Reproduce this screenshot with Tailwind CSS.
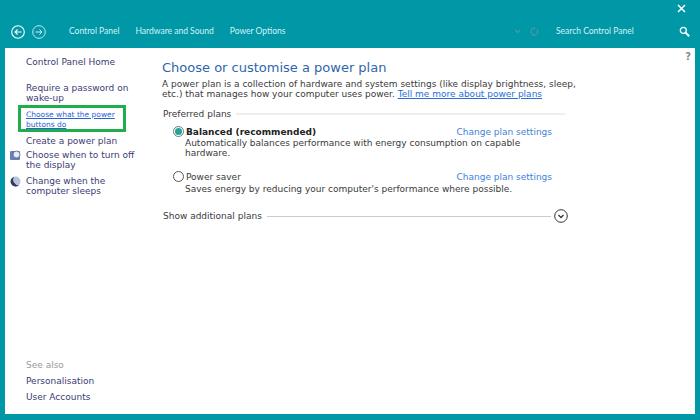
<!DOCTYPE html>
<html>
<head>
    <meta charset="utf-8">
    <title>Power Options</title>
    <script src="https://cdn.jsdelivr.net/npm/@tailwindcss/browser@4"></script>
</head>
<body class="m-0">
<div class="w-[700px] h-[420px] bg-[#0097a7] flex flex-col overflow-hidden font-['DejaVu_Sans',sans-serif]">

    <!-- Barra de titulo -->
    <div class="h-[48px] shrink-0 flex flex-col">
        <div class="h-[17px] flex justify-end items-end pr-[14px]">
            <svg width="9" height="9" viewBox="0 0 9 9" class="mb-[4px]"><path d="M1 1l7 7M8 1l-7 7" stroke="#fff" stroke-width="1.5" fill="none"/></svg>
        </div>
        <div class="flex items-center h-[31px] pb-[2px] font-['Lato',sans-serif] text-[8.5px] text-[#d5f2f5]">
            <div class="flex items-center gap-[7px] pl-[11px] w-[69px]">
                <svg width="14" height="14" viewBox="0 0 14 14" fill="none" stroke="#fff"><circle cx="7" cy="7" r="6.3" stroke-width="1.1"/><path d="M10.5 7h-6.5M6.5 4.5L4 7l2.5 2.5" stroke-width="1.1"/></svg>
                <svg width="14" height="14" viewBox="0 0 14 14" fill="none" stroke="#d5f2f5"><circle cx="7" cy="7" r="6.3" stroke-width="0.9"/><path d="M3.5 7h6.5M7.5 4.5L10 7l-2.5 2.5" stroke-width="1"/></svg>
            </div>
            <div class="flex gap-[16px]">
                <span>Control Panel</span>
                <span>Hardware and Sound</span>
                <span>Power Options</span>
            </div>
            <div class="ml-auto flex items-center">
                <svg width="7" height="5" viewBox="0 0 7 5" fill="none" stroke="#4f9aa0" stroke-width="1.1"><path d="M1 1l2.5 2.5L6 1"/></svg>
                <svg width="9" height="9" viewBox="0 0 9 9" fill="none" stroke="#4f9aa0" stroke-width="1.1" class="ml-[9px]"><path d="M6.8 2.2a3.4 3.4 0 1 1-2.3-.9M4.5 0v2.6"/></svg>
                <span class="ml-[17px] w-[123px]">Search Control Panel</span>
                <svg width="11" height="11" viewBox="0 0 11 11" fill="none" stroke="#fff" class="mr-[10px]"><circle cx="4.3" cy="4.3" r="3" stroke-width="1.3"/><path d="M6.6 6.6l3.6 3.6" stroke-width="2"/></svg>
            </div>
        </div>
    </div>

    <!-- Contenido -->
    <div class="relative mx-[5px] h-[366px] bg-white flex text-[9px] leading-[10px]">
        <span class="absolute top-[3px] right-[4px] text-[10px] leading-[12px] font-bold text-[#8a8a8a]">?</span>

        <!-- Panel izquierdo -->
        <aside class="w-[157px] shrink-0 flex flex-col pl-[21px] text-[#3b3b74]">
            <div class="mt-[9px]">Control Panel Home</div>
            <div class="mt-[16px]">Require a password on<br>wake-up</div>
            <div class="mt-[2px] ml-[-8px] w-[108px] h-[27px] shrink-0 border-[3px] border-[#1fae4b] pl-[5px] pt-[2px] text-[7.5px] text-[#2a5fd6] underline whitespace-nowrap">Choose what the power<br>buttons do</div>
            <div class="mt-[4px]">Create a power plan</div>
            <div class="relative mt-[4px]">
                <svg width="11" height="11" viewBox="0 0 11 11" class="absolute left-[-16px] top-0"><rect x="0" y="1" width="10" height="9" rx="1" fill="#6a7fb8"/><circle cx="6.5" cy="4.5" r="3.5" fill="#e8ecf6" stroke="#555f85" stroke-width="0.8"/></svg>
                Choose when to turn off<br>the display
            </div>
            <div class="relative mt-[6px]">
                <svg width="11" height="11" viewBox="0 0 11 11" class="absolute left-[-16px] top-0"><circle cx="5.5" cy="5.5" r="5" fill="#b9c2da"/><path d="M4 .8a5 5 0 1 0 5 8.4A5.5 5.5 0 0 1 4 .8z" fill="#2f3a5c"/></svg>
                Change when the<br>computer sleeps
            </div>
            <div class="mt-auto mb-[12px] flex flex-col gap-[6px]">
                <div class="text-[#999]">See also</div>
                <div>Personalisation</div>
                <div>User Accounts</div>
            </div>
        </aside>

        <!-- Panel principal -->
        <main class="flex-1 pt-[12px] text-[#3a3a3a]">
            <h1 class="text-[13px] leading-[15px] font-normal text-[#2f66ab]">Choose or customise a power plan</h1>
            <p class="mt-[4px] whitespace-nowrap">A power plan is a collection of hardware and system settings (like display brightness, sleep,<br>etc.) that manages how your computer uses power. <span class="text-[#2a6fd6] underline">Tell me more about power plans</span></p>

            <div class="mt-[10px] ml-[1px] w-[402px] flex items-center gap-[5px]">
                <span>Preferred plans</span>
                <div class="flex-1 h-[2px] bg-[#eeeeee]"></div>
            </div>

            <div class="mt-[7px] ml-[11px] w-[379px]">
                <div class="flex items-center">
                    <span class="w-[11px] h-[11px] rounded-full border border-[#5d7f84] flex items-center justify-center"><span class="w-[7px] h-[7px] rounded-full bg-[#2aa198]"></span></span>
                    <span class="ml-[2px] font-bold text-[#222]">Balanced (recommended)</span>
                    <span class="ml-auto text-[#3f7fd8]">Change plan settings</span>
                </div>
                <p class="mt-[1px] ml-[12px]">Automatically balances performance with energy consumption on capable<br>hardware.</p>
            </div>

            <div class="mt-[13px] ml-[11px] w-[379px]">
                <div class="flex items-center">
                    <span class="w-[11px] h-[11px] rounded-full border border-[#555]"></span>
                    <span class="ml-[2px]">Power saver</span>
                    <span class="ml-auto text-[#3f7fd8]">Change plan settings</span>
                </div>
                <p class="mt-[2px] ml-[12px]">Saves energy by reducing your computer's performance where possible.</p>
            </div>

            <div class="mt-[15px] ml-[1px] w-[405px] flex items-center gap-[5px]">
                <span>Show additional plans</span>
                <div class="flex-1 h-[1px] bg-[#cccccc]"></div>
                <svg width="14" height="14" viewBox="0 0 14 14" fill="none" stroke="#333" class="ml-[-2px]"><circle cx="7" cy="7" r="6.3"/><path d="M4.5 6l2.5 2.5L9.5 6" stroke-width="1.3"/></svg>
            </div>
        </main>
    </div>
</div>
</body>
</html>
